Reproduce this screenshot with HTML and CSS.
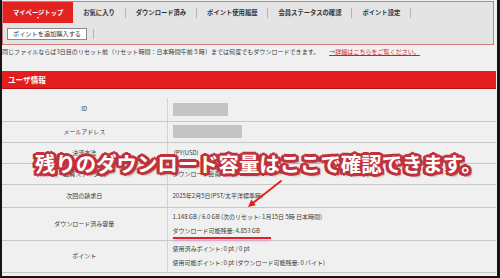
FILE: index.html
```html
<!DOCTYPE html>
<html lang="ja">
<head>
    <meta charset="UTF-8">
    <title>マイページ</title>
    <link rel="stylesheet" href="styles.css">
</head>
<body>
    <div class="page">
        <nav class="menu">
            <ul class="menu-row">
                <li class="tab active">マイページトップ</li>
                <li class="tab">お気に入り</li><li class="sep"></li>
                <li class="tab">ダウンロード済み</li><li class="sep"></li>
                <li class="tab">ポイント使用履歴</li><li class="sep"></li>
                <li class="tab">会員ステータスの確認</li><li class="sep"></li>
                <li class="tab">ポイント設定</li><li class="sep"></li>
            </ul>
            <div class="menu-sub">
                <button class="buy-btn">ポイントを追加購入する</button>
                <span class="sep"></span>
            </div>
        </nav>

        <p class="notice">同じファイルならば3日目のリセット前（リセット時間：日本時間午前 5 時）までは何度でもダウンロードできます。<a href="#" class="notice-link">→詳細はこちらをご覧ください。</a></p>

        <h2 class="section-title">ユーザ情報</h2>

        <table class="info">
            <tr>
                <td class="label">ID</td>
                <td class="value"><span class="blank blank-id"></span></td>
            </tr>
            <tr>
                <td class="label">メールアドレス</td>
                <td class="value"><span class="blank blank-mail"></span></td>
            </tr>
            <tr>
                <td class="label">決済方法</td>
                <td class="value">JPY(USD)</td>
            </tr>
            <tr>
                <td class="label">会員ステータス</td>
                <td class="value">ダウンロード会員</td>
            </tr>
            <tr>
                <td class="label">次回の請求日</td>
                <td class="value">2025年2月5日(PST/太平洋標準時)</td>
            </tr>
            <tr class="double">
                <td class="label">ダウンロード済み容量</td>
                <td class="value">
                    1.148 GB / 6.0 GB (次のリセット: 1月15日 5時 日本時間)<br>
                    <span class="mark">ダウンロード可能残量: 4.853 GB</span>
                </td>
            </tr>
            <tr class="double">
                <td class="label">ポイント</td>
                <td class="value">
                    使用済みポイント: 0 pt / 0 pt<br>
                    使用可能ポイント: 0 pt (ダウンロード可能残量: 0 バイト)
                </td>
            </tr>
        </table>

        <div class="callout">残りのダウンロード容量はここで確認できます。</div>

        <svg class="arrow" viewBox="0 0 495 276" width="495" height="276">
            <line x1="279" y1="181" x2="251" y2="203" stroke="#e2231f" stroke-width="2" stroke-linecap="round"/>
            <polygon points="246,207 253.8,205.2 249.3,199.6" fill="#e2231f"/>
        </svg>
    </div>
</body>
</html>
```

FILE: styles.css
```css
:root {
    --bg: #f0f0f0;
    --menu-bg: #e4e4e4;
    --red: #e31d1d;
    --text: #3a3a3a;
    --line: #c6c6c6;
}

* {
    box-sizing: border-box;
}

body {
    margin: 0;
    background: var(--bg);
    font-family: "Noto Sans CJK JP", "Noto Sans", sans-serif;
    font-size: 6px;
    color: var(--text);
}

.page {
    position: relative;
    height: 278px;
    border-left: 2px solid #151515;
    border-right: 3px solid #151515;
    border-bottom: 2px solid #151515;
    padding-top: 1px;
    overflow: hidden;
}

/* menu */

.menu {
    margin-right: 3px;
    background: var(--menu-bg);
    border: 1px solid #d07a7a;
}

.menu-row {
    display: flex;
    height: 21px;
    margin: 0;
    padding: 0;
    list-style: none;
}

.tab {
    display: flex;
    align-items: center;
    padding: 0 10px;
    font-size: 6.3px;
    font-weight: 700;
    color: #333;
    white-space: nowrap;
}

.tab.active {
    position: relative;
    background: #e2231f;
    color: #fff;
}

.tab.active::after {
    content: '';
    position: absolute;
    left: 50%;
    bottom: 3px;
    margin-left: -1px;
    border: 1.5px solid transparent;
    border-top: 2px solid #fff;
}

.sep {
    align-self: center;
    width: 1px;
    height: 10px;
    background: #b4b4b4;
}

.menu-sub {
    display: flex;
    align-items: center;
    gap: 6px;
    height: 21px;
    padding-left: 4px;
}

.buy-btn {
    height: 12px;
    padding: 0 5px;
    background: #fff;
    border: 1px solid #8a8a8a;
    font-family: inherit;
    font-size: 6.2px;
    line-height: 10px;
    color: #333;
}

/* notice */

.notice {
    margin: 2px 0 0;
    font-size: 6.05px;
    line-height: 10px;
    white-space: nowrap;
}

.notice-link {
    margin-left: 10px;
    color: #d81c1c;
}

/* user info */

.section-title {
    margin: 14px 1px 0 0;
    height: 18px;
    padding-left: 6px;
    background: var(--red);
    border-bottom: 1px solid #b51313;
    color: #fff;
    font-size: 7.6px;
    font-weight: 700;
    line-height: 17px;
}

.info {
    width: calc(100% - 1px);
    margin-top: 9px;
    border-collapse: collapse;
}

.info td {
    height: 21px;
    padding: 0;
    border-bottom: 1px solid var(--line);
    line-height: 14px;
    white-space: nowrap;
}

.info tr:first-child td {
    height: 23px;
}

.info tr:nth-child(5) td {
    height: 23px;
}

.info tr.double td {
    height: 33px;
}

.info tr:last-child td {
    height: 32px;
}

.info .label {
    width: 165px;
    text-align: center;
}

.info .value {
    padding-left: 5px;
    border-left: 1px solid #d2d2d2;
}

.blank {
    display: block;
    height: 13px;
    background: #c4c4c4;
}

.blank-id {
    width: 55px;
}

.blank-mail {
    width: 69px;
}

.mark {
    position: relative;
    display: inline-block;
}

.mark::after {
    content: '';
    position: absolute;
    left: 0;
    right: -11px;
    bottom: -1px;
    height: 2px;
    background: #e0202e;
    box-shadow: 0 2px 3px rgba(240, 120, 200, 0.6);
}

/* annotation overlay */

.callout {
    position: absolute;
    left: 33px;
    top: 151px;
    font-size: 20.4px;
    font-weight: 700;
    line-height: 25px;
    color: #fff;
    white-space: nowrap;
    text-shadow:
        2px 0 0 #bf323b, -2px 0 0 #bf323b, 0 2px 0 #bf323b, 0 -2px 0 #bf323b,
        2px 2px 0 #bf323b, -2px -2px 0 #bf323b, 2px -2px 0 #bf323b, -2px 2px 0 #bf323b,
        3px 0 0 #bf323b, -3px 0 0 #bf323b, 0 3px 0 #bf323b, 0 -3px 0 #bf323b,
        3px 1.5px 0 #bf323b, -3px 1.5px 0 #bf323b, 3px -1.5px 0 #bf323b, -3px -1.5px 0 #bf323b,
        3px 3px 2px rgba(60, 0, 0, 0.45);
}

.arrow {
    position: absolute;
    left: 0;
    top: 0;
    pointer-events: none;
}
```
